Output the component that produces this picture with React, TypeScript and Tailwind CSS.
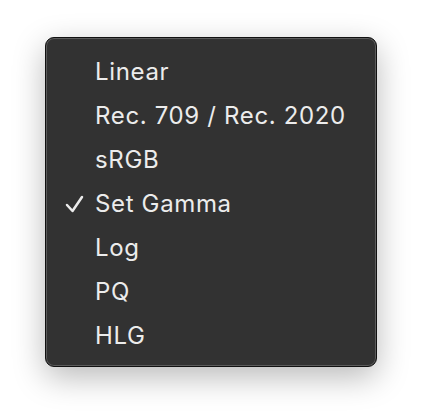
import React from 'react'

const items = ['Linear', 'Rec. 709 / Rec. 2020', 'sRGB', 'Set Gamma', 'Log', 'PQ', 'HLG']
const selected = 'Set Gamma'

function Check() {
  return (
    <svg width="19" height="18" viewBox="0 0 19 18" fill="none">
      <path d="M2 10 L7.5 16 L17 2" stroke="#ececec" strokeWidth="2.5" strokeLinecap="round" strokeLinejoin="round" />
    </svg>
  )
}

export default function App() {
  return (
    <div className="w-[422px] h-[420px] bg-white pl-[45px] pt-[37px]" style={{ fontFamily: 'Inter, "Liberation Sans", sans-serif' }}>
      <div className="w-[332px] h-[330px] rounded-[9px] border border-[#111] bg-[#323232] pt-[12px] pb-[10px] shadow-[inset_0_0_0_1px_rgba(255,255,255,0.2),0_10px_32px_rgba(0,0,0,0.28)]">
        {items.map((item) => (
          <div key={item} className="h-[44px] flex items-center pl-[19px]">
            <div className="w-[30px] flex items-center">{item === selected && <Check />}</div>
            <span className="text-[24px] tracking-[0.65px] text-[#ececec] leading-none">{item}</span>
          </div>
        ))}
      </div>
    </div>
  )
}
